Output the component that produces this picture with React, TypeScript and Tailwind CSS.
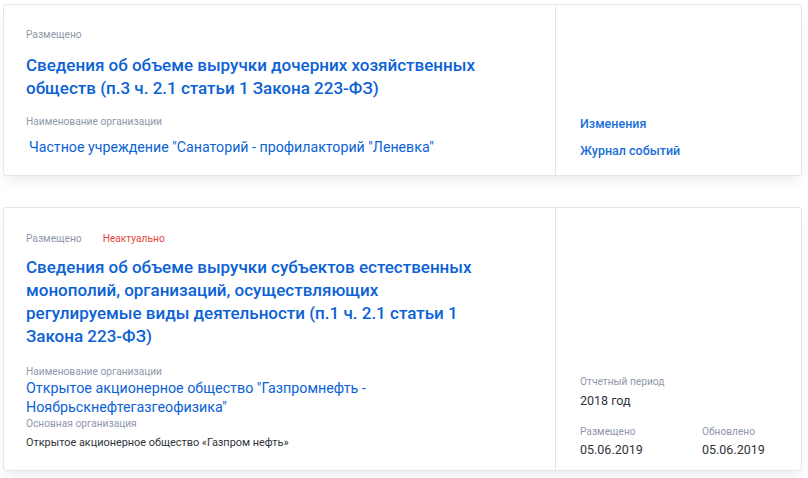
const font = { fontFamily: "Roboto, 'Noto Sans', sans-serif" };

function Label({ children }: { children: React.ReactNode }) {
  return <div className="text-[10.2px] leading-[14px] text-[#8f98ab]">{children}</div>;
}

function FirstCard() {
  return (
    <div className="flex h-[172px] rounded-[3px] border border-[#e3e6ef] bg-white shadow-[0_8px_12px_-4px_rgba(40,50,80,0.10)]">
      <div className="w-[552px] border-r border-[#e3e6ef] pl-[22px] pr-[40px] pt-[23px]">
        <Label>Размещено</Label>
        <div className="mt-[12px] max-w-[470px] text-[17px] font-medium leading-[23px] text-[#0b62d6]">
          Сведения об объеме выручки дочерних хозяйственных обществ (п.3 ч. 2.1 статьи 1 Закона 223-ФЗ)
        </div>
        <div className="mt-[15px]">
          <Label>Наименование организации</Label>
        </div>
        <div className="mt-[9px] pl-[3px] text-[14.2px] leading-[18px] text-[#0b62d6]">
          Частное учреждение "Санаторий - профилакторий "Леневка"
        </div>
      </div>
      <div className="flex flex-1 flex-col pl-[24px] pt-[111px] text-[12.5px] font-medium leading-[16px] text-[#1a6fd8]">
        <div>Изменения</div>
        <div className="mt-[11px]">Журнал событий</div>
      </div>
    </div>
  );
}

function SecondCard() {
  return (
    <div className="flex h-[264px] rounded-[3px] border border-[#e3e6ef] bg-white shadow-[0_8px_12px_-4px_rgba(40,50,80,0.10)]">
      <div className="w-[552px] border-r border-[#e3e6ef] pl-[22px] pr-[40px] pt-[24px]">
        <div className="flex gap-[21px]">
          <Label>Размещено</Label>
          <div className="text-[10.2px] leading-[14px] text-[#e5473a]">Неактуально</div>
        </div>
        <div className="mt-[10px] max-w-[470px] text-[17px] font-medium leading-[23px] text-[#0b62d6]">
          Сведения об объеме выручки субъектов естественных монополий, организаций, осуществляющих регулируемые виды деятельности (п.1 ч. 2.1 статьи 1 Закона 223-ФЗ)
        </div>
        <div className="mt-[17px]">
          <Label>Наименование организации</Label>
        </div>
        <div className="mt-0 max-w-[380px] text-[14.3px] leading-[19px] text-[#0b62d6]">
          Открытое акционерное общество "Газпромнефть - Ноябрьскнефтегазгеофизика"
        </div>
        <Label>Основная организация</Label>
        <div className="mt-[4px] text-[10.9px] leading-[15px] text-[#2f333b]">
          Открытое акционерное общество «Газпром нефть»
        </div>
      </div>
      <div className="flex flex-1 flex-col pl-[24px] pt-[167px]">
        <Label>Отчетный период</Label>
        <div className="mt-[4px] text-[12.5px] leading-[16px] text-[#2f333b]">2018 год</div>
        <div className="mt-[16px] grid grid-cols-[122px_1fr]">
          <div>
            <Label>Размещено</Label>
            <div className="mt-[3px] text-[12.5px] leading-[16px] text-[#2f333b]">05.06.2019</div>
          </div>
          <div>
            <Label>Обновлено</Label>
            <div className="mt-[3px] text-[12.5px] leading-[16px] text-[#2f333b]">05.06.2019</div>
          </div>
        </div>
      </div>
    </div>
  );
}

export default function App() {
  return (
    <div className="h-[478px] w-[808px] bg-white pl-[3px] pt-[4px]" style={font}>
      <div className="w-[799px]">
        <FirstCard />
        <div className="mt-[31px]">
          <SecondCard />
        </div>
      </div>
    </div>
  );
}
